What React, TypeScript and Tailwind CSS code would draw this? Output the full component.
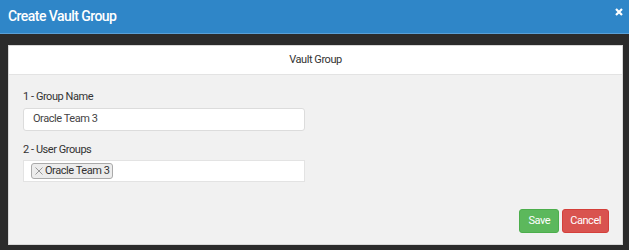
import React from "react";

function App() {
  return (
    <div
      className="w-[629px] h-[250px] bg-[#2b2b2b] flex flex-col overflow-hidden"
      style={{ fontFamily: "Roboto, 'Liberation Sans', sans-serif" }}
    >
      {/* Modal header */}
      <div className="h-[34px] bg-[#2f86c8] border-b border-[#5aa0d6] flex items-center justify-between pl-[8px] pr-[6px] shrink-0">
        <h1 className="text-white text-[14px] font-medium tracking-[-0.55px]">Create Vault Group</h1>
        <svg width="8" height="8" viewBox="0 0 8 8" className="self-start mt-[8px]">
          <path d="M1 1 L7 7 M7 1 L1 7" stroke="#fff" strokeWidth="2.2" />
        </svg>
      </div>

      {/* Panel */}
      <div className="mt-[11px] ml-[8px] mr-[6px] h-[200px] bg-[#f1f1f1] border border-[#d8d8d8] flex flex-col text-[11px] tracking-[-0.45px]">
        <div className="h-[29px] bg-white border-b border-[#e3e3e3] flex items-center justify-center text-[#333]">
          Vault Group
        </div>

        <div className="flex flex-col pl-[14px] pt-[15px]">
          <label className="text-[#333] leading-[14px]">1 - Group Name</label>
          <div className="mt-[4px] w-[282px] h-[23px] bg-white border border-[#dcdcdc] rounded-[3px] flex items-center px-[9px] text-[#444]">
            Oracle Team 3
          </div>

          <label className="mt-[12px] text-[#333] leading-[14px]">2 - User Groups</label>
          <div className="mt-[3px] w-[282px] h-[22px] bg-white border border-[#e3e3e3] flex items-center px-[7px]">
            <span className="h-[16px] flex items-center gap-[2px] bg-[#ececec] border border-[#aaa] rounded-[3px] px-[3px] text-[#333]">
              <svg width="8" height="8" viewBox="0 0 8 8">
                <path d="M0.5 0.5 L7.5 7.5 M7.5 0.5 L0.5 7.5" stroke="#999" strokeWidth="1" />
              </svg>
              Oracle Team 3
            </span>
          </div>
        </div>

        <div className="mt-auto mb-[11px] mr-[13px] flex justify-end gap-[3px]">
          <button className="h-[24px] px-[8px] bg-[#5cb85c] border border-[#4cae4c] rounded-[3px] text-white">
            Save
          </button>
          <button className="h-[24px] px-[7px] bg-[#d9534f] border border-[#d43f3a] rounded-[3px] text-white">
            Cancel
          </button>
        </div>
      </div>
    </div>
  );
}

export default App;
